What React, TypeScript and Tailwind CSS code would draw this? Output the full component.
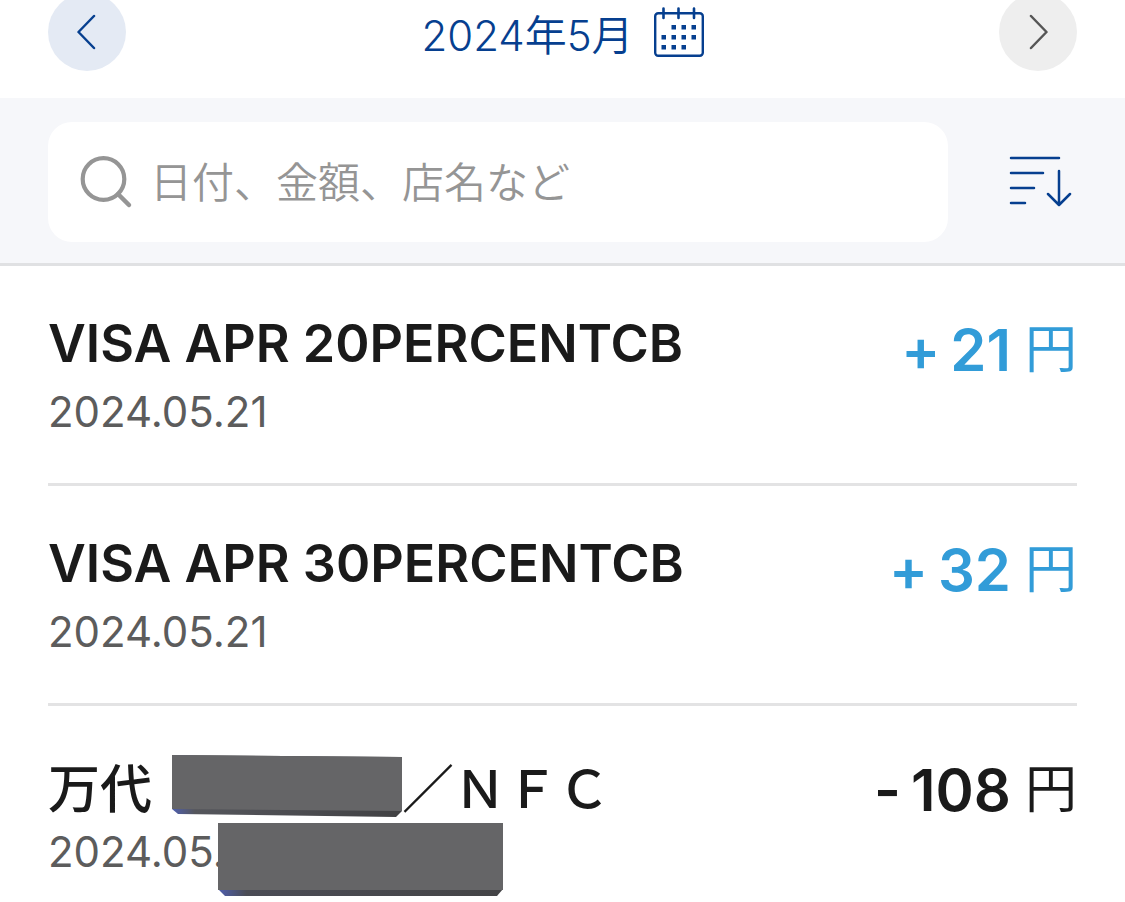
import React, { useState } from 'react';
import { clsx } from 'clsx';

interface Transaction {
  id: number;
  name: React.ReactNode;
  date: React.ReactNode;
  sign: '+' | '-';
  amount: number;
}

// Grey block that hides a part of the text
function ShopMask() {
  return (
    <svg width="230" height="64" viewBox="0 0 230 64" className="mb-2 block shrink-0" aria-hidden="true">
      <defs>
        <linearGradient id="shopEdge" x1="0" x2="1" y1="0" y2="0">
          <stop offset="0" stopColor="#4f5fae" />
          <stop offset="0.1" stopColor="#55565c" />
          <stop offset="1" stopColor="#414143" />
        </linearGradient>
      </defs>
      <path d="M0 1 L230 3 V57 L224 63 L6 60 L0 55 Z" fill="url(#shopEdge)" />
      <path d="M0 1 L230 3 V57 L0 55 Z" fill="#656567" />
    </svg>
  );
}

function DateMask() {
  return (
    <svg width="286" height="76" viewBox="0 0 286 76" className="absolute left-[170px] top-0" aria-hidden="true">
      <defs>
        <linearGradient id="dateEdge" x1="0" x2="1" y1="0" y2="0">
          <stop offset="0" stopColor="#4f5fae" />
          <stop offset="0.1" stopColor="#4b4c55" />
          <stop offset="1" stopColor="#444446" />
        </linearGradient>
      </defs>
      <path d="M0 1 H285 V67 L279 74 H7 L0 67 Z" fill="url(#dateEdge)" />
      <path d="M0 1 H285 V68 H0 Z" fill="#656567" />
    </svg>
  );
}

const transactions: Transaction[] = [
  { id: 1, name: 'VISA APR 20PERCENTCB', date: '2024.05.21', sign: '+', amount: 21 },
  { id: 2, name: 'VISA APR 30PERCENTCB', date: '2024.05.21', sign: '+', amount: 32 },
  {
    id: 3,
    name: (
      <span className="flex items-center font-medium">
        <span className="mr-5">万代</span>
        <ShopMask />
        <span>／ＮＦＣ</span>
      </span>
    ),
    date: (
      <>
        2024.05.
        <DateMask />
      </>
    ),
    sign: '-',
    amount: 108,
  },
];

function CalendarIcon() {
  const dots = [
    [18, 18], [28, 18], [38, 18],
    [8, 28], [18, 28], [28, 28], [38, 28],
    [8, 38], [18, 38], [28, 38],
  ];
  return (
    <svg width="50" height="50" viewBox="0 0 50 50" fill="none" aria-hidden="true">
      <rect x="1.200" y="6.200" width="47.600" height="42.600" rx="3" stroke="#063f8f" strokeWidth="2.400" />
      <path d="M9.500 1.500 V11 M24.500 1.500 V11 M40 1.500 V11" stroke="#063f8f" strokeWidth="2.600" strokeLinecap="round" />
      {dots.map(([x, y]) => (
        <rect key={x + '-' + y} x={x - 0.5} y={y} width="4.500" height="4.500" fill="#063f8f" />
      ))}
    </svg>
  );
}

function Row({ item }: { item: Transaction }) {
  return (
    <li className="flex h-[220px] items-start justify-between border-b-[3px] border-[#e3e3e4] pt-12">
      <div>
        <div className="h-[60px] whitespace-nowrap text-[52px] leading-[60px] font-semibold text-[#1a1a1a]">
          {item.name}
        </div>
        <div className="relative mt-2 text-[42px] leading-[60px] text-[#5c5c5c]">{item.date}</div>
      </div>
      <div
        className={clsx(
          'flex items-center gap-2.5 whitespace-nowrap leading-[72px]',
          item.sign === '+' ? 'text-[#329cd8]' : 'text-[#1a1a1a]'
        )}
      >
        <span className="text-[58px] font-semibold">{item.sign}</span>
        <span className="mr-1 text-[58px] font-semibold">{item.amount}</span>
        <span className="text-[52px] font-normal">円</span>
      </div>
    </li>
  );
}

export default function App() {
  const [query, setQuery] = useState('');

  return (
    <div className="h-screen overflow-hidden bg-white font-['Inter','Noto_Sans_CJK_JP',sans-serif]">
      <header className="-mt-[7px] flex items-center justify-between px-12 pb-[27px]">
        <button aria-label="前の月" className="flex size-[78px] items-center justify-center rounded-full bg-[#e4eaf4]">
          <svg width="20" height="36" viewBox="0 0 20 36" fill="none" aria-hidden="true">
            <path d="M17 2 L1.500 18 L17 34" stroke="#063f8f" strokeWidth="2.500" strokeLinecap="round" strokeLinejoin="round" />
          </svg>
        </button>
        <button className="flex items-center gap-5 text-[42px] leading-[60px] font-[350] text-[#063f8f]">
          <span className="pt-2">2024年5月</span>
          <CalendarIcon />
        </button>
        <button aria-label="次の月" className="flex size-[78px] items-center justify-center rounded-full bg-[#eeeeee]">
          <svg width="20" height="36" viewBox="0 0 20 36" fill="none" aria-hidden="true">
            <path d="M3 2 L18.500 18 L3 34" stroke="#555555" strokeWidth="2.500" strokeLinecap="round" strokeLinejoin="round" />
          </svg>
        </button>
      </header>

      <div className="flex items-center gap-[60px] border-b-[3px] border-[#e0e1e3] bg-[#f6f7fa] pt-6 pr-12 pb-[21px] pl-12">
        <label className="flex h-[120px] min-w-0 flex-1 items-center gap-4 rounded-3xl bg-white px-8">
          <svg width="54" height="54" viewBox="0 0 54 54" fill="none" className="shrink-0" aria-hidden="true">
            <circle cx="23.500" cy="24" r="20.800" stroke="#959595" strokeWidth="4.200" />
            <path d="M38 39 L49 50" stroke="#959595" strokeWidth="4.500" strokeLinecap="round" />
          </svg>
          <input
            type="text"
            aria-label="検索"
            value={query}
            onChange={(e) => setQuery(e.target.value)}
            placeholder="日付、金額、店名など"
            className="h-[60px] min-w-0 flex-1 text-[42px] font-[350] text-[#1a1a1a] outline-none placeholder:text-[#959595]"
          />
        </label>
        <button aria-label="並べ替え" className="shrink-0">
          <svg width="69" height="52" viewBox="0 0 69 52" fill="none" aria-hidden="true">
            <path
              d="M3 2 H51 M3 17 H35 M3 32 H26 M3 47 H17 M51 15 V48 M40 38 L51 49 L62 38"
              stroke="#063f8f"
              strokeWidth="2.500"
              strokeLinecap="round"
              strokeLinejoin="round"
            />
          </svg>
        </button>
      </div>

      <ul className="px-12">
        {transactions.map((item) => (
          <Row key={item.id} item={item} />
        ))}
      </ul>
    </div>
  );
}
